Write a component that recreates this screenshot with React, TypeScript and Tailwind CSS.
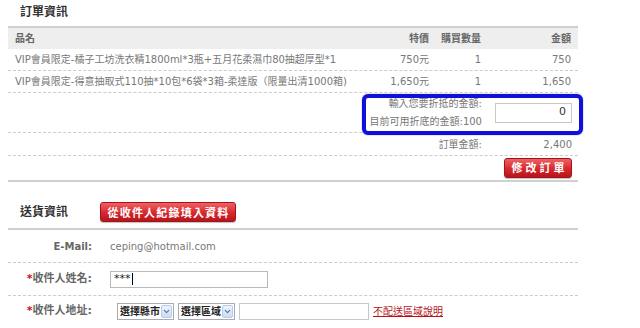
import { ChevronDown } from "lucide-react"

const font = { fontFamily: '"DejaVu Sans", "Noto Sans CJK TC", sans-serif' }

const items = [
  {
    name: "VIP會員限定-橘子工坊洗衣精1800ml*3瓶+五月花柔濕巾80抽超厚型*1",
    price: "750元",
    qty: "1",
    total: "750",
  },
  {
    name: "VIP會員限定-得意抽取式110抽*10包*6袋*3箱-柔達版（限量出清1000箱)",
    price: "1,650元",
    qty: "1",
    total: "1,650",
  },
]

function RedButton({ children, className }: { children: React.ReactNode; className?: string }) {
  return (
    <button
      type="button"
      className={
        "flex h-[20px] items-center justify-center whitespace-nowrap rounded-[3px] border border-[#a3141a] bg-gradient-to-b from-[#ef6064] via-[#d92a30] to-[#b8141b] p-0 text-[11px] font-bold text-white shadow-[0_1px_1px_rgba(0,0,0,0.25)] " +
        (className ?? "")
      }
      style={{ fontFamily: '"Noto Sans CJK TC", sans-serif' }}
    >
      {children}
    </button>
  )
}

function FakeSelect({ label }: { label: string }) {
  return (
    <div className="flex h-[17px] items-center gap-[1px] border border-[#a5acb5] bg-white pl-[2px] pr-[1px]">
      <span className="text-[10px] font-bold leading-none text-[#222]">{label}</span>
      <span className="flex h-[13px] w-[11px] items-center justify-center rounded-[2px] border border-[#b8cbe6] bg-gradient-to-b from-[#eef4fc] to-[#cddcf2]">
        <ChevronDown className="h-[9px] w-[9px] text-[#4d6fa6]" strokeWidth={3} />
      </span>
    </div>
  )
}

export default function App() {
  return (
    <div className="relative h-[328px] w-[640px] overflow-hidden bg-white text-[10px] text-[#777]" style={font}>
      <div className="ml-[8px] w-[570px]">
        {/* 訂單資訊 */}
        <div className="flex h-[26px] items-center pb-[2px] pl-[12px] text-[12px] font-bold text-[#333]">訂單資訊</div>

        <div className="flex h-[23px] items-center border-t-2 border-[#cfcfcf] bg-[#eeeeee] px-[7px] font-bold text-[#666]">
          <span className="flex-1">品名</span>
          <span className="w-[60px] text-right">特價</span>
          <span className="w-[52px] text-right">購買數量</span>
          <span className="w-[90px] text-right">金額</span>
        </div>

        {items.map((it) => (
          <div key={it.name} className="flex h-[22px] items-center border-b border-dashed border-[#cccccc] px-[7px]">
            <span className="flex-1 whitespace-nowrap">{it.name}</span>
            <span className="w-[60px] text-right">{it.price}</span>
            <span className="w-[52px] text-right">{it.qty}</span>
            <span className="w-[90px] text-right">{it.total}</span>
          </div>
        ))}

        <div className="flex h-[40px] items-center justify-end border-b border-dashed border-[#cccccc] pr-[6px]">
          <div className="flex flex-col items-end gap-[4px] leading-[14px]">
            <span>輸入您要折抵的金額:</span>
            <span>目前可用折底的金額:100</span>
          </div>
          <div className="ml-[13px] flex h-[20px] w-[77px] items-center justify-end border border-[#c8c8c8] pr-[5px] text-[11px] text-[#333]">0</div>
        </div>

        <div className="flex h-[23px] items-center justify-end border-b border-dashed border-[#cccccc] pr-[6px]">
          <span>訂單金額:</span>
          <span className="w-[90px] text-right">2,400</span>
        </div>

        <div className="flex h-[26px] items-center justify-end border-b-2 border-[#cfcfcf] pb-[1px] pr-[6px]">
          <RedButton className="w-[68px] pl-[3px] tracking-[3px]">修改訂單</RedButton>
        </div>

        {/* 送貨資訊 */}
        <div className="flex h-[48px] items-end border-b-2 border-[#cfcfcf] pb-[6px] pl-[12px]">
          <span className="mb-[1px] w-[80px] text-[12px] font-bold text-[#333]">送貨資訊</span>
          <RedButton className="w-[136px] pl-[1px] tracking-[1.2px]">從收件人紀錄填入資料</RedButton>
        </div>

        <div className="flex h-[33px] items-center border-b border-dashed border-[#cccccc]">
          <span className="w-[84px] text-right font-bold text-[#666]">E-Mail:</span>
          <span className="ml-[18px]">ceping@hotmail.com</span>
        </div>

        <div className="flex h-[33px] items-center border-b border-dashed border-[#cccccc]">
          <span className="w-[84px] text-right text-[11px] font-bold text-[#666]">
            <span className="text-[#c4141c]">*</span>收件人姓名:
          </span>
          <div className="ml-[18px] flex h-[17px] w-[158px] items-center border border-[#b9b9b9] pl-[3px] text-[11px] text-[#222]">
            ***<span className="ml-[1px] h-[12px] w-[1px] bg-black" />
          </div>
        </div>

        <div className="flex h-[31px] items-center">
          <span className="w-[84px] text-right text-[11px] font-bold text-[#666]">
            <span className="text-[#c4141c]">*</span>收件人地址:
          </span>
          <div className="ml-[25px] flex items-center gap-[4px]">
            <FakeSelect label="選擇縣市" />
            <FakeSelect label="選擇區域" />
            <div className="h-[17px] w-[130px] border border-[#c8c8c8]" />
            <a href="#" className="text-[10px] text-[#b5121b] underline">不配送區域說明</a>
          </div>
        </div>
      </div>

      {/* blue marker highlight */}
      <div className="pointer-events-none absolute left-[362px] top-[94px] h-[41px] w-[221px] rounded-[6px] border-[4px] border-[#1010d8] shadow-[0_0_1px_#1010d8]" />
    </div>
  )
}
